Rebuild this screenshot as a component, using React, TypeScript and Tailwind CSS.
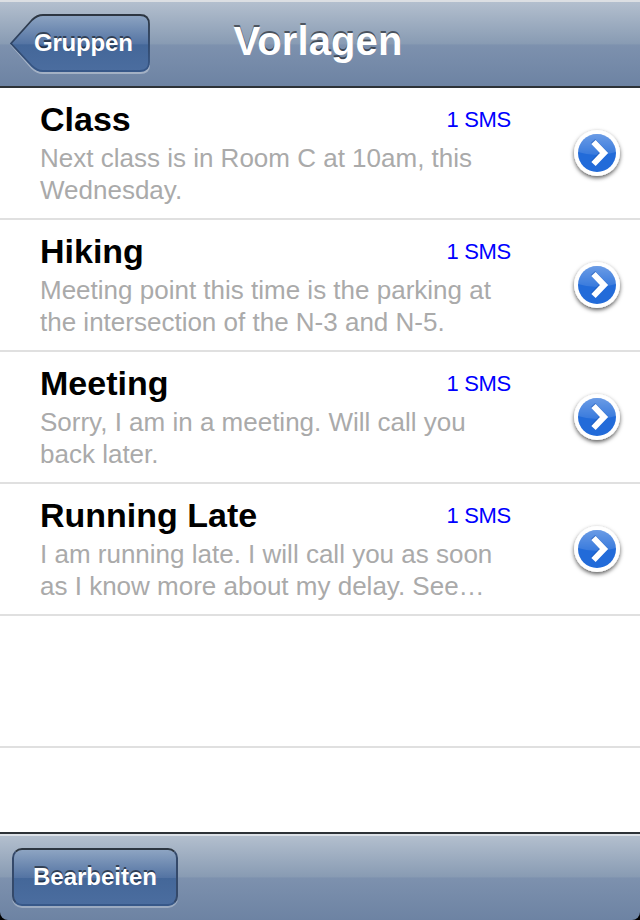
const templates = [
  { title: 'Class', count: '1 SMS', lines: ['Next class is in Room C at 10am, this', 'Wednesday.'] },
  { title: 'Hiking', count: '1 SMS', lines: ['Meeting point this time is the parking at', 'the intersection of the N-3 and N-5.'] },
  { title: 'Meeting', count: '1 SMS', lines: ['Sorry, I am in a meeting. Will call you', 'back later.'] },
  { title: 'Running Late', count: '1 SMS', lines: ['I am running late. I will call you as soon', 'as I know more about my delay. See…'] },
];

const DisclosureIcon = () => (
  <svg width="60" height="64" viewBox="0 0 60 64">
    <defs>
      <linearGradient id="gloss" x1="0" y1="0" x2="0" y2="1">
        <stop offset="0" stopColor="#fff" stopOpacity="0.36" />
        <stop offset="1" stopColor="#fff" stopOpacity="0.1" />
      </linearGradient>
      <clipPath id="discClip">
        <circle cx="30" cy="30" r="19" />
      </clipPath>
      <filter id="drop" x="-30%" y="-30%" width="160%" height="170%">
        <feDropShadow dx="0" dy="2" stdDeviation="2" floodColor="#000" floodOpacity="0.65" />
      </filter>
    </defs>
    <circle cx="30" cy="30" r="23" fill="#fff" filter="url(#drop)" />
    <circle cx="30" cy="30" r="19" fill="#226bd9" />
    <path d="M8 8 H52 V28 Q30 36 8 28 Z" fill="url(#gloss)" clipPath="url(#discClip)" />
    <path d="M26.5 19 L37 30 L26.5 41" fill="none" stroke="#1552b0" strokeOpacity="0.5" strokeWidth="6" transform="translate(-0.5 -1)" />
    <path d="M26.5 19 L37 30 L26.5 41" fill="none" stroke="#fff" strokeWidth="6" />
  </svg>
);

const BackButton = () => (
  <button className="relative h-[60px] w-[142px]">
    <svg className="absolute inset-0" width="142" height="60" viewBox="0 0 142 60">
      <defs>
        <linearGradient id="back" x1="0" y1="0" x2="0" y2="1">
          <stop offset="0" stopColor="#8da4c2" />
          <stop offset="0.52" stopColor="#5474a3" />
          <stop offset="0.53" stopColor="#446799" />
          <stop offset="1" stopColor="#4b6d9f" />
        </linearGradient>
        <linearGradient id="backEdge" x1="0" y1="0" x2="0" y2="1">
          <stop offset="0" stopColor="#2d3641" />
          <stop offset="0.5" stopColor="#2f4566" />
          <stop offset="1" stopColor="#375889" />
        </linearGradient>
      </defs>
      <path d="M1 30 L22 54 Q27 59 33 59 H130 Q139 59 139 51" fill="none" stroke="#fff" strokeOpacity="0.35" strokeWidth="2" />
      <path d="M33 1 H130 Q139 1 139 10 V48 Q139 57 130 57 H33 Q27 57 22 52 L1 29.5 L22 6 Q27 1 33 1 Z" fill="url(#back)" stroke="url(#backEdge)" strokeWidth="1.8" />
    </svg>
    <span className="absolute top-[14px] left-[24px] text-2xl leading-[30px] font-bold text-white tracking-[-0.2px] [text-shadow:0_-2px_0_rgba(0,0,0,0.5)]">
      Gruppen
    </span>
  </button>
);

const App = () => {
  return (
    <div className="flex h-[920px] w-[640px] flex-col overflow-hidden bg-white font-['Liberation_Sans',Arial,sans-serif]">
      {/* Navigation bar */}
      <header className="grid h-[88px] shrink-0 grid-cols-[222px_1fr_226px] border-t-2 border-b-2 border-t-[#dcdfe3] border-b-[#2d3237] bg-[linear-gradient(to_bottom,#b3bfce_0%,#889bb3_50%,#7d91ae_51%,#6d83a3_100%)]">
        <div className="pt-3 pl-[10px]">
          <BackButton />
        </div>
        <h1 className="pt-4 text-center text-[40px] leading-[46px] font-bold whitespace-nowrap text-white tracking-[0.1px] [text-shadow:0_-2px_0_rgba(0,0,0,0.5)]">
          Vorlagen
        </h1>
      </header>

      {/* Template list */}
      <main className="flex-1">
        {templates.map((item) => (
          <div key={item.title} className="flex h-[132px] justify-between border-b-2 border-[#e0e0e0] pr-[13px] pl-10">
            <div className="w-[471px] pt-[11px]">
              <div className="flex items-start justify-between">
                <h2 className="text-[34px] leading-10 font-bold text-black">{item.title}</h2>
                <span className="pt-px text-[22px] leading-10 tracking-[-0.3px] text-[#0000ff]">{item.count}</span>
              </div>
              <p className="pt-[2px] text-[26px] leading-8 whitespace-nowrap text-[#aaaaaa]">
                {item.lines[0]}
                <br />
                {item.lines[1]}
              </p>
            </div>
            <button className="mt-[35px] h-16 w-[60px]">
              <DisclosureIcon />
            </button>
          </div>
        ))}
        <div className="h-[132px] border-b-2 border-[#e0e0e0]" />
      </main>

      {/* Toolbar */}
      <div className="shrink-0 bg-black">
        <footer className="h-[88px] rounded-b-[8px] border-t-2 border-[#2d3237] bg-[linear-gradient(to_bottom,#dce1e7_0px,#dce1e7_2px,#b3bfce_2px,#889bb3_50%,#7d91ae_51%,#6d83a3_100%)] pt-[14px] pl-3">
          <button className="h-[58px] w-[166px] rounded-[10px] border-2 border-t-[#2d3641] border-r-[#34496a] border-b-[#375889] border-l-[#34496a] bg-[linear-gradient(to_bottom,#8da4c2_0%,#5474a3_51%,#446799_52%,#4b6d9f_100%)] text-2xl font-bold text-white shadow-[0_2px_0_rgba(255,255,255,0.3)] [text-shadow:0_-2px_0_rgba(0,0,0,0.5)]">
            Bearbeiten
          </button>
        </footer>
      </div>
    </div>
  );
};

export default App;
